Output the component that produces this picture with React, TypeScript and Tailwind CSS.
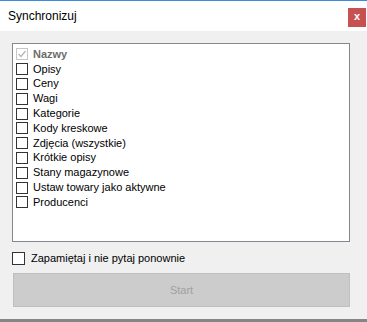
import React from "react";

const items = [
  "Opisy",
  "Ceny",
  "Wagi",
  "Kategorie",
  "Kody kreskowe",
  "Zdjęcia (wszystkie)",
  "Krótkie opisy",
  "Stany magazynowe",
  "Ustaw towary jako aktywne",
  "Producenci",
];

export default function App() {
  return (
    <div
      className="w-[367px] h-[322px] flex flex-col overflow-hidden bg-[#f0f0f0] text-[11px] text-black"
      style={{ fontFamily: '"Liberation Sans", Arial, sans-serif' }}
    >
      <div className="h-px bg-[#3c8ad8]" />
      <div className="h-[30px] bg-white flex items-start justify-between">
        <div className="pl-[8px] pt-[8px] leading-[15px] text-[12px]">Synchronizuj</div>
        <div className="mt-[7px] mr-px w-[18px] h-[19px] bg-[#c75050] flex items-center justify-center text-white text-[11px] font-bold leading-none pb-[2px]">
          x
        </div>
      </div>
      <div className="flex-1 flex flex-col pl-[12px] pt-[12px]">
        <div className="w-[338px] h-[199px] bg-white border border-[#828790] pt-[3px] pl-[3px] flex flex-col">
          <div className="h-[14.8px] flex items-center">
            <div className="w-[12px] h-[12px] border border-[#c6c6c6] bg-white flex items-center justify-center">
              <svg width="10" height="10" viewBox="0 0 10 10">
                <path d="M1.5 5 L4 7.5 L8.5 2" fill="none" stroke="#b5b5b5" strokeWidth="1.2" />
              </svg>
            </div>
            <span className="ml-[5px] font-bold text-[#6d6d6d] leading-none">Nazwy</span>
          </div>
          {items.map((t) => (
            <div key={t} className="h-[14.8px] flex items-center">
              <div className="w-[12px] h-[12px] border border-[#333333] bg-white" />
              <span className="ml-[5px] leading-none">{t}</span>
            </div>
          ))}
        </div>
        <div className="mt-[9px] h-[14px] flex items-center">
          <div className="w-[13px] h-[13px] border border-[#333333] bg-white" />
          <span className="ml-[6px] leading-none">Zapamiętaj i nie pytaj ponownie</span>
        </div>
        <div className="mt-[8px] ml-px w-[337px] h-[34px] bg-[#cccccc] border border-[#bfbfbf] flex items-center justify-center text-[#a0a0a0]">
          Start
        </div>
      </div>
      <div className="h-[3px] bg-[#858585]" />
    </div>
  );
}
